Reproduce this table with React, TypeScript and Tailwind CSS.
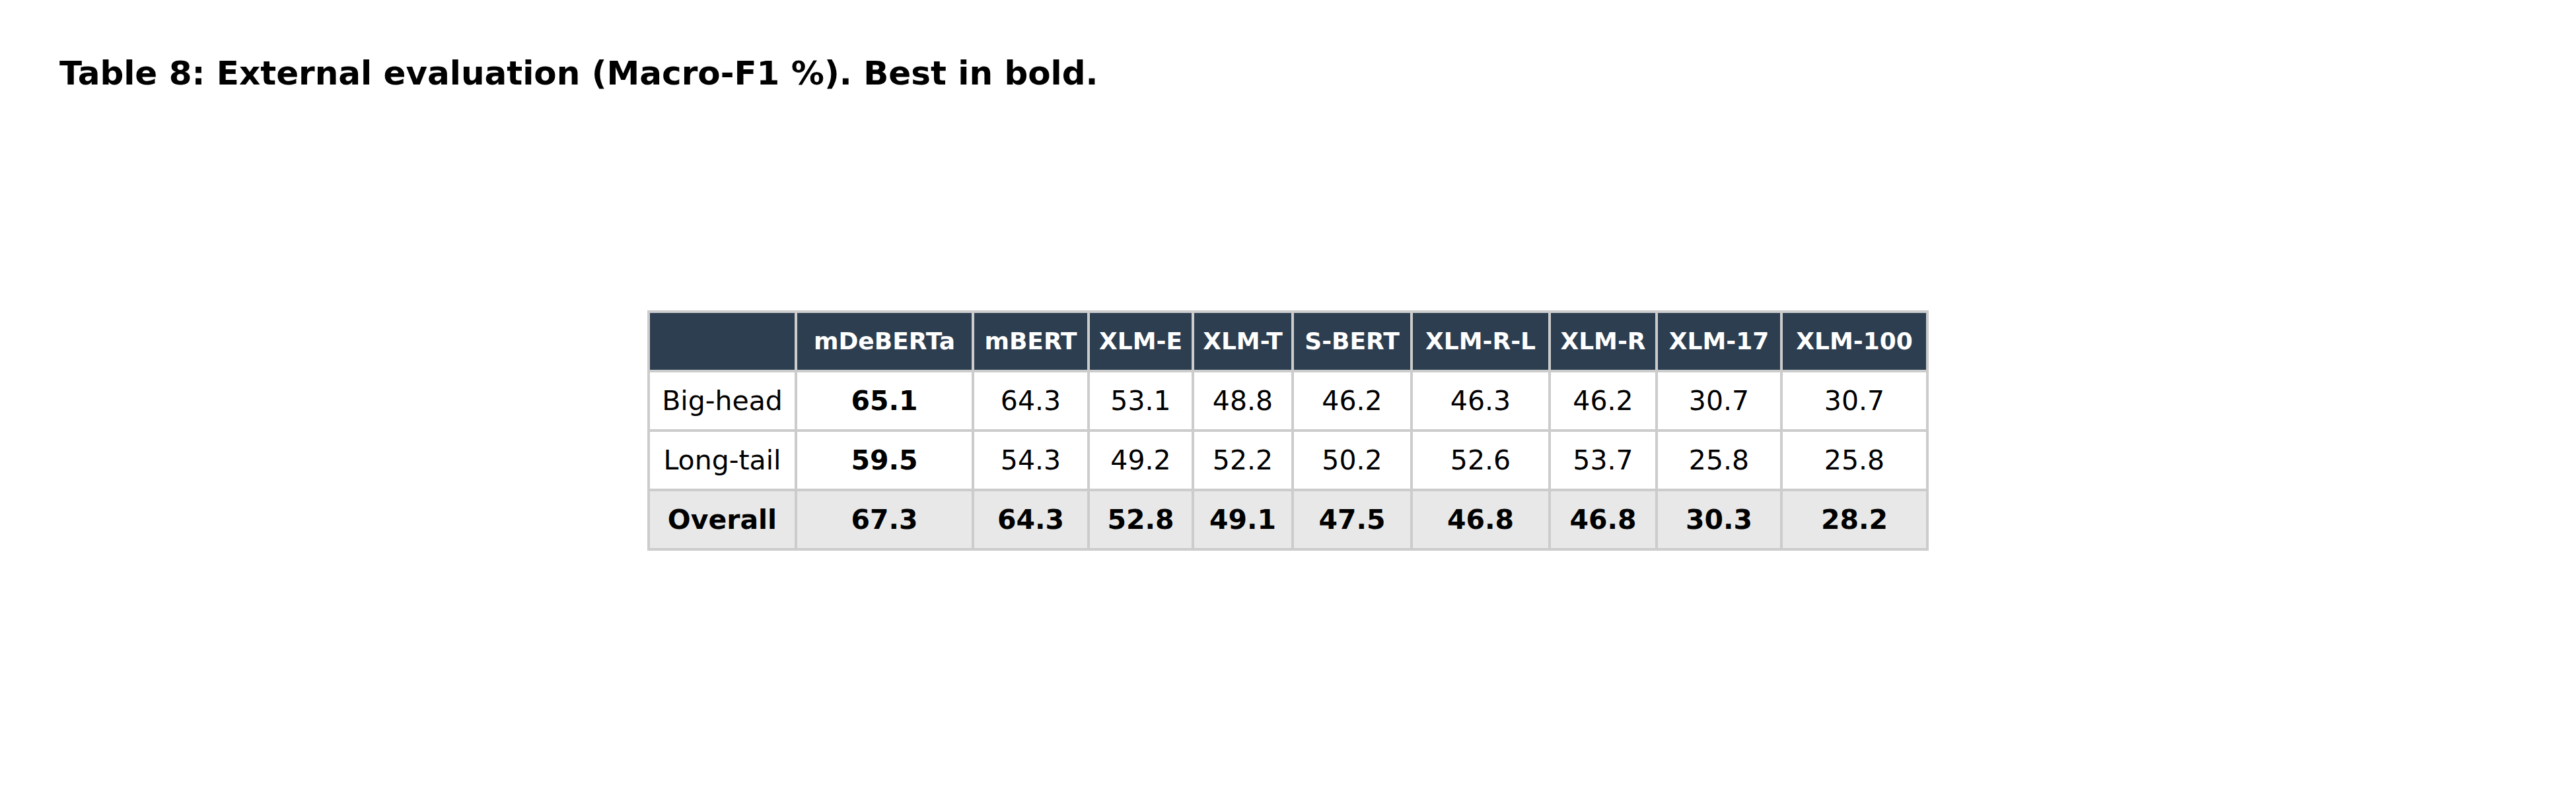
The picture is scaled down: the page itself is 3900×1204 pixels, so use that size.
type Column = {
  label: string;
  width: string;
};

const columns: Column[] = [
  { label: '', width: 'w-[219px]' },
  { label: 'mDeBERTa', width: 'w-[264px]' },
  { label: 'mBERT', width: 'w-[171px]' },
  { label: 'XLM-E', width: 'w-[154px]' },
  { label: 'XLM-T', width: 'w-[147px]' },
  { label: 'S-BERT', width: 'w-[176px]' },
  { label: 'XLM-R-L', width: 'w-[205px]' },
  { label: 'XLM-R', width: 'w-[158px]' },
  { label: 'XLM-17', width: 'w-[185px]' },
  { label: 'XLM-100', width: 'w-[217px]' },
];

type Row = {
  name: string;
  values: string[];
  best: number;
  overall?: boolean;
};

const rows: Row[] = [
  {
    name: 'Big-head',
    values: ['65.1', '64.3', '53.1', '48.8', '46.2', '46.3', '46.2', '30.7', '30.7'],
    best: 0,
  },
  {
    name: 'Long-tail',
    values: ['59.5', '54.3', '49.2', '52.2', '50.2', '52.6', '53.7', '25.8', '25.8'],
    best: 0,
  },
  {
    name: 'Overall',
    values: ['67.3', '64.3', '52.8', '49.1', '47.5', '46.8', '46.8', '30.3', '28.2'],
    best: -1,
    overall: true,
  },
];

export default function App() {
  return (
    <div className="min-h-[1204px] w-[3900px] bg-white font-['DejaVu_Sans',sans-serif] text-black">
      <div className="pl-[90px] pt-[86px]">
        <h1 className="text-[50px] font-bold leading-none">
          Table 8: External evaluation (Macro-F1 %). Best in bold.
        </h1>
      </div>

      <div className="mt-[334px] flex justify-center">
        <table className="border-separate border-spacing-[4px] bg-[#cccccc]">
          <thead>
            <tr>
              {columns.map((col, i) => (
                <th
                  key={i}
                  className={`${col.width} h-[86px] bg-[#2c3e50] p-0 text-center align-middle text-[36px] font-bold leading-none text-white`}
                >
                  {col.label}
                </th>
              ))}
            </tr>
          </thead>
          <tbody>
            {rows.map((row) => (
              <tr key={row.name}>
                <td
                  className={`h-[86px] p-0 text-center align-middle text-[41px] leading-none ${
                    row.overall ? 'bg-[#e8e8e8] font-bold' : 'bg-white'
                  }`}
                >
                  {row.name}
                </td>
                {row.values.map((v, i) => (
                  <td
                    key={i}
                    className={`h-[86px] p-0 text-center align-middle text-[41px] leading-none ${
                      row.overall ? 'bg-[#e8e8e8] font-bold' : 'bg-white'
                    } ${i === row.best ? 'font-bold' : ''}`}
                  >
                    {v}
                  </td>
                ))}
              </tr>
            ))}
          </tbody>
        </table>
      </div>
    </div>
  );
}
